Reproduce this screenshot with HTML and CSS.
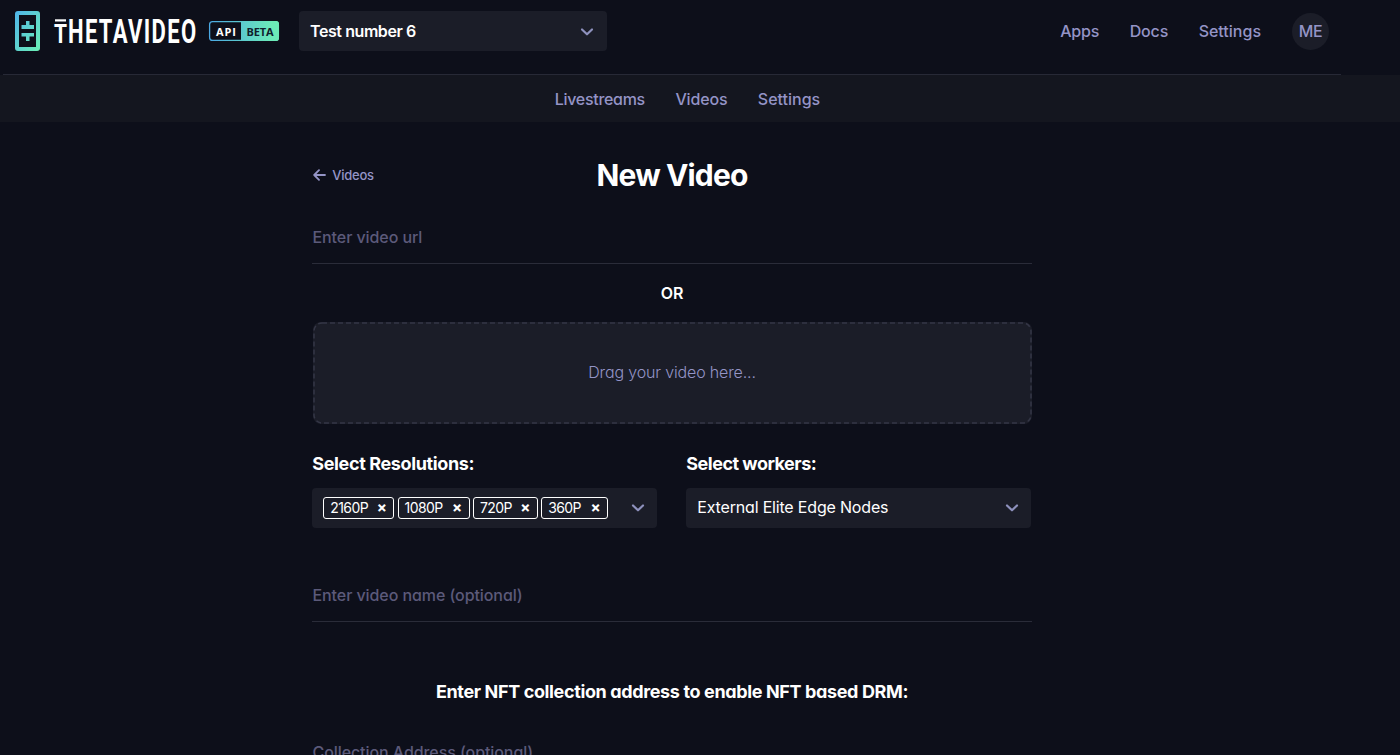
FILE: index.html
```html
<!DOCTYPE html>
<html lang="en">
<head>
<meta charset="utf-8">
<title>Theta Video API</title>
<link rel="stylesheet" href="styles.css">
</head>
<body>
<header class="header">
  <a class="brand">
    <svg class="brand-logo" width="270" height="42" viewBox="0 0 270 42">
      <defs>
        <linearGradient id="mark" x1="0" y1="0" x2="1" y2="1"><stop offset="0" stop-color="#4fb4ea"/><stop offset="1" stop-color="#6cf0b4"/></linearGradient>
        <linearGradient id="badge" gradientUnits="userSpaceOnUse" x1="194" y1="0" x2="264" y2="0"><stop offset="0" stop-color="#4aa8e4"/><stop offset=".9" stop-color="#6ceab8"/></linearGradient>
      </defs>
      <path fill="url(#mark)" fill-rule="evenodd" d="M3 1H22Q25 1 25 4V38Q25 41 22 41H3Q0 41 0 38V4Q0 1 3 1ZM4 5V37H21V5ZM11 11H14.5V15H19V19H6.500V15H11ZM6.500 23H19V26.500H14.500V31H11V26.500H6.500Z"/>
      <rect x="40" y="9.300" width="11" height="2.200" fill="#fff"/>
      <text class="wordmark" x="39" y="33" textLength="13" lengthAdjust="spacingAndGlyphs" font-size="26">T</text>
      <text class="wordmark spaced" x="53" y="33" textLength="129.500" lengthAdjust="spacingAndGlyphs" font-size="33">HETAVIDEO</text>
      <rect x="194.600" y="11.600" width="68.800" height="18.800" rx="3" fill="none" stroke="url(#badge)" stroke-width="1.300"/>
      <path d="M226 11H261Q264 11 264 14V28Q264 31 261 31H226Z" fill="url(#badge)"/>
      <text class="tag" x="201" y="25.500" textLength="20" fill="#fff">API</text>
      <text class="tag" x="231.500" y="25.500" textLength="27" fill="#10202c">BETA</text>
    </svg>
  </a>
  <div class="select app-select"><span class="app-name">Test number 6</span>
    <svg class="chevron" width="14" height="10" viewBox="0 0 14 10"><path d="M2 2.500 7 7.300 12 2.500"/></svg></div>
  <nav class="links"><a class="snug">Apps</a><a class="snug">Docs</a><a>Settings</a></nav>
  <div class="avatar">ME</div>
</header>
<nav class="subnav"><a class="livestreams">Livestreams</a><a class="snug">Videos</a><a>Settings</a></nav>
<main class="content">
  <div class="title-row">
    <a class="back"><svg width="13" height="12" viewBox="0 0 13 12"><path d="M12 6H1.500M6 1.200 1.200 6 6 10.800"/></svg><span>Videos</span></a>
    <h1>New Video</h1>
  </div>
  <div class="field">Enter video url</div>
  <div class="or">OR</div>
  <div class="dropzone"><svg class="dash" width="719" height="102"><rect x="1" y="1" width="717" height="100" rx="8"/></svg><span>Drag your video here...</span></div>
  <div class="columns">
    <section><h2>Select Resolutions:</h2>
      <div class="select"><div class="chips">
        <span class="chip c1"><b>2160P</b><i>×</i></span><span class="chip c2"><b>1080P</b><i>×</i></span><span class="chip c3"><b>720P</b><i>×</i></span><span class="chip c4"><b>360P</b><i>×</i></span></div>
        <svg class="chevron" width="14" height="10" viewBox="0 0 14 10"><path d="M2 2.500 7 7.300 12 2.500"/></svg></div></section>
    <section><h2 class="workers-title">Select workers:</h2>
      <div class="select"><span class="worker">External Elite Edge Nodes</span>
        <svg class="chevron" width="14" height="10" viewBox="0 0 14 10"><path d="M2 2.500 7 7.300 12 2.500"/></svg></div></section>
  </div>
  <div class="field name-field">Enter video name (optional)</div>
  <h2 class="drm">Enter NFT collection address to enable NFT based DRM:</h2>
  <div class="field">Collection Address (optional)</div>
</main>
</body>
</html>
```
FILE: styles.css
```css
* { box-sizing: border-box; }
body { margin: 0; height: 755px; overflow: hidden; background: #0d0f1a; color: #fff; font: 500 16px/20px Inter, "Open Sans", sans-serif; font-feature-settings: "cv11"; }
h1, h2 { margin: 0; }
.header { display: flex; align-items: flex-start; width: 1338px; height: 75px; margin-left: 3px; padding: 10px 12px 0; border-bottom: 1px solid #272936; }
.brand { display: block; width: 284px; height: 42px; }
.brand-logo { display: block; }
.wordmark { font-family: Roboto, sans-serif; font-weight: 700; fill: #fff; }
.spaced { letter-spacing: 2px; }
.tag { font: 700 11px "Open Sans", sans-serif; }
.select { display: flex; align-items: center; justify-content: space-between; height: 40px; padding: 0 12.500px 0 11px; border-radius: 4px; background: #1b1d28; white-space: nowrap; }
.app-select { width: 308px; margin-top: 1px; padding-right: 13px; }
.app-select .chevron { margin-top: 2px; }
.app-name { font-weight: 600; letter-spacing: -.42px; }
.chevron { flex: none; fill: none; stroke: #8e91bd; stroke-width: 2.2; stroke-linecap: round; stroke-linejoin: round; }
.links { display: flex; gap: 30.500px; margin: 11px 31px 0 auto; color: #9494c6; }
.snug { letter-spacing: -.17px; }
.livestreams { letter-spacing: -.3px; }
.avatar { width: 37px; height: 37px; margin-top: 3px; border-radius: 50%; background: #1b1d28; color: #9494c6; line-height: 37px; text-align: center; letter-spacing: -.4px; }
.subnav { display: flex; justify-content: center; gap: 30.500px; height: 47px; padding: 14px 25px 0 0; background: #14161f; color: #9494c6; }
.content { width: 720px; margin-left: 312px; }
.title-row { display: grid; grid-template-columns: 1fr auto 1fr; align-items: center; height: 105px; }
.back { display: flex; align-items: center; gap: 6.500px; padding: 1px 0 0 .8px; color: #9494c6; font-size: 13px; letter-spacing: -.25px; }
.back svg { fill: none; stroke: #9494c6; stroke-width: 1.8; stroke-linecap: round; stroke-linejoin: round; }
h1 { padding-top: 1px; font-size: 30px; font-weight: 700; line-height: 40px; letter-spacing: -.85px; }
.field { height: 37px; padding-left: .5px; border-bottom: 1px solid #2a2c39; color: #5c5a7a; letter-spacing: -.08px; }
.or { height: 58px; padding-top: 19px; text-align: center; font-weight: 600; }
.dropzone { position: relative; display: flex; align-items: center; justify-content: center; width: 719px; height: 102px; margin-left: .5px; padding-bottom: 2px; border-radius: 8px; background: #1b1d28; color: #9494c6; font-weight: 300; letter-spacing: -.15px; }
.dash { position: absolute; inset: 0; fill: none; stroke: #343646; stroke-width: 1.500; stroke-dasharray: 5 3; }
.columns { display: grid; grid-template-columns: 345px 345px; gap: 29px; padding-top: 28px; margin-left: .3px; }
h2 { font-size: 18px; font-weight: 700; line-height: 24px; letter-spacing: -.37px; white-space: nowrap; }
.workers-title { letter-spacing: -.5px; }
.columns h2 { margin-bottom: 12px; }
.chips { display: flex; gap: 3.300px; }
.chip { display: flex; align-items: center; justify-content: space-between; height: 22px; padding: 0 7px 1px 6px; border: 1.500px solid #fff; border-radius: 3px; font-size: 14px; letter-spacing: -.6px; }
.chip b { font-weight: 400; }
.chip i { font-style: normal; font-weight: 700; font-size: 15px; }
.c1 { width: 71px; } .c2 { width: 72px; } .c3 { width: 65px; } .c4 { width: 67px; }
.worker { padding-bottom: 2px; font-weight: 400; letter-spacing: -.18px; }
.name-field { margin-top: 57px; }
.drm { margin: 58px 0 38px; text-align: center; }
```
